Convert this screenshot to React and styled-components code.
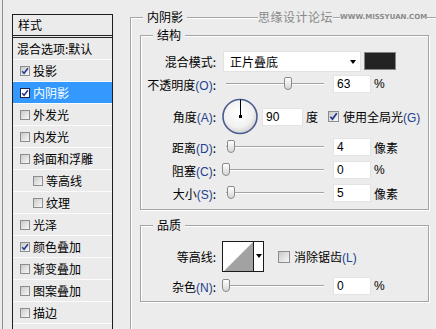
import styled, { createGlobalStyle } from "styled-components";

const GlobalStyle = createGlobalStyle`
  html, body {
    margin: 0;
    padding: 0;
    overflow: hidden;
    background: #ececec;
  }
  body {
    font-family: "Noto Sans CJK SC", "Liberation Sans", sans-serif;
    font-size: 12px;
    color: #000;
  }
`;

const Page = styled.div`
  display: flex;
  width: 436px;
  height: 329px;
  overflow: hidden;
  padding-left: 2px;
  box-sizing: border-box;
`;

const Frame = styled.div`
  display: flex;
  align-items: flex-start;
  flex: 1;
  border-left: 1px solid #8e8e8e;
  padding: 14px 0 0 9px;
`;

/* ---------- style list on the left ---------- */

const Sidebar = styled.div`
  width: 101px;
  height: 330px;
  flex-shrink: 0;
  box-sizing: border-box;
  border: 1px solid #1e1e1e;
  border-bottom: none;
  background: #ebebeb;
`;

const SidebarHeader = styled.div`
  height: 20px;
  line-height: 20px;
  padding-left: 5px;
  border-bottom: 3px double #222;
`;

const ListRow = styled.div`
  display: flex;
  align-items: center;
  gap: 3px;
  height: 22px;
  box-sizing: border-box;
  padding-left: ${(p) => p.$indent}px;
  border-bottom: 1px solid #fbfbfb;
  background: ${(p) => (p.$selected ? "#3399ff" : "transparent")};
  color: ${(p) => (p.$selected ? "#fff" : "#000")};
  white-space: nowrap;
`;

const Box = styled.span`
  display: inline-flex;
  align-items: center;
  justify-content: center;
  width: ${(p) => p.$size}px;
  height: ${(p) => p.$size}px;
  box-sizing: border-box;
  flex-shrink: 0;
  border: 1px solid ${(p) => (p.$light ? "#1c2550" : "#8d8d8d")};
  background: ${(p) =>
    p.$light ? "#fff" : "linear-gradient(135deg, #c9c9c9, #f8f8f8)"};
`;

function CheckBox({ checked, size = 10, light }) {
  return (
    <Box $size={size} $light={light}>
      {checked && (
        <svg width={size - 2} height={size - 2} viewBox="0 0 8 8">
          <path d="M1.2 4.2 L3.1 6.3 L6.9 1.2" fill="none" stroke="#26358a" strokeWidth="1.5" />
        </svg>
      )}
    </Box>
  );
}

const styles = [
  { name: "投影", checked: true },
  { name: "内阴影", checked: true, selected: true },
  { name: "外发光" },
  { name: "内发光" },
  { name: "斜面和浮雕" },
  { name: "等高线", sub: true },
  { name: "纹理", sub: true },
  { name: "光泽" },
  { name: "颜色叠加", checked: true },
  { name: "渐变叠加" },
  { name: "图案叠加" },
  { name: "描边" },
];

/* ---------- right side ---------- */

const Main = styled.div`
  margin: 3px 0 0 17px;
  flex-shrink: 0;
`;

const OuterGroup = styled.div`
  position: relative;
  width: 330px;
  height: 330px;
  box-sizing: border-box;
  border-top: 1px solid #a5a5a5;
  border-left: 1px solid #a5a5a5;
  box-shadow: inset 1px 1px 0 #fff;
  padding: 17px 0 0 9px;
`;

const Group = styled.div`
  position: relative;
  width: 289px;
  height: ${(p) => p.$height}px;
  margin-top: ${(p) => p.$gap || 0}px;
  box-sizing: border-box;
  border: 1px solid #a5a5a5;
  box-shadow: inset 1px 1px 0 #fff, 1px 1px 0 #fff;
  padding-top: 15px;
`;

const GroupTitle = styled.span`
  position: absolute;
  top: -8px;
  left: 12px;
  line-height: 14px;
  padding: 0 4px;
  background: #ececec;
`;

const Watermark = styled.div`
  position: absolute;
  top: -8px;
  left: 127px;
  display: flex;
  align-items: center;
  gap: 7px;
  height: 14px;
  color: #8a8a8a;
`;

const WatermarkText = styled.span`
  background: #ececec;
  line-height: 14px;
  letter-spacing: 0.5px;
`;

const WatermarkUrl = styled.span`
  background: #ececec;
  font-family: "DejaVu Sans", sans-serif;
  font-size: 7px;
  font-weight: bold;
  line-height: 14px;
  white-space: nowrap;
`;

const FormRow = styled.div`
  display: flex;
  align-items: center;
  height: ${(p) => p.$height || 18}px;
  margin-top: ${(p) => p.$gap || 0}px;
`;

const Label = styled.span`
  width: 77px;
  box-sizing: border-box;
  padding-right: 2px;
  margin-right: 4px;
  text-align: right;
  white-space: nowrap;
`;

const Key = styled.span`
  font-family: "Liberation Sans", sans-serif;
  color: #22408c;
`;

const Select = styled.div`
  position: relative;
  width: 138px;
  height: 21px;
  margin-left: 1px;
  box-sizing: border-box;
  background: #fff;
  border: 1px solid #e2e2e2;
  padding-left: 6px;
  line-height: 19px;

  &::after {
    content: "";
    position: absolute;
    right: 4px;
    top: 8px;
    border-left: 3.5px solid transparent;
    border-right: 3.5px solid transparent;
    border-top: 4px solid #000;
  }
`;

const Swatch = styled.div`
  width: 32px;
  height: 18px;
  margin: 0 0 2px 3px;
  box-sizing: border-box;
  border: 1px solid #858585;
  background: #232323;
`;

const SliderWrap = styled.div`
  position: relative;
  width: 102px;
  height: 14px;
`;

const Track = styled.div`
  position: absolute;
  left: 4px;
  right: 0;
  top: 6px;
  height: 1px;
  background: #a3a3a3;
  border-bottom: 1px solid #fff;
`;

const Thumb = styled.div`
  position: absolute;
  top: 0;
  width: 8px;
  height: 13px;
  box-sizing: border-box;
  border: 1px solid #8a8a8a;
  border-radius: 2px 2px 4px 4px;
  background: linear-gradient(#ffffff, #d6d6d6);
`;

function Slider({ pos }) {
  return (
    <SliderWrap>
      <Track />
      <Thumb style={{ left: pos }} />
    </SliderWrap>
  );
}

const Input = styled.div`
  width: ${(p) => p.$width || 38}px;
  height: 18px;
  margin-left: ${(p) => p.$left ?? 9}px;
  box-sizing: border-box;
  background: #fff;
  border: 1px solid #e4e4e4;
  padding-left: 3px;
  font-family: "Liberation Sans", sans-serif;
  font-size: 12px;
  line-height: 16px;
`;

const Unit = styled.span`
  margin-left: 3px;
  font-family: ${(p) => (p.$latin ? '"Liberation Sans", sans-serif' : "inherit")};
`;

const Check = styled.label`
  display: flex;
  align-items: center;
  gap: 4px;
  margin-left: ${(p) => p.$left}px;
  white-space: nowrap;
`;

const Contour = styled.div`
  display: flex;
  width: 42px;
  height: 31px;
  box-sizing: border-box;
  border: 1px solid #1a1a1a;
  background: #fff;
`;

const ContourArrow = styled.div`
  position: relative;
  flex: 1;
  border-left: 1px solid #1a1a1a;

  &::after {
    content: "";
    position: absolute;
    left: 2px;
    top: 12px;
    border-left: 3px solid transparent;
    border-right: 3px solid transparent;
    border-top: 4px solid #000;
  }
`;

function Dial() {
  return (
    <svg width="36" height="37" viewBox="0 0 36 37">
      <defs>
        <radialGradient id="dialFill" cx="45%" cy="40%" r="60%">
          <stop offset="0%" stopColor="#ffffff" />
          <stop offset="70%" stopColor="#f1f1f1" />
          <stop offset="100%" stopColor="#d2d2d2" />
        </radialGradient>
      </defs>
      <circle cx="18" cy="18.5" r="17" fill="url(#dialFill)" stroke="#4b5c8e" strokeWidth="1.6" />
      <line x1="18.5" y1="1.5" x2="18.5" y2="18.5" stroke="#000" strokeWidth="1" />
      <rect x="17" y="17" width="3" height="3" fill="#000" />
    </svg>
  );
}

export default function App() {
  return (
    <>
      <GlobalStyle />
      <Page>
        <Frame>
          <Sidebar>
            <SidebarHeader>样式</SidebarHeader>
            <ListRow $indent={4}>混合选项:默认</ListRow>
            {styles.map((s) => (
              <ListRow key={s.name} $indent={s.sub ? 20 : 7} $selected={s.selected}>
                <CheckBox checked={s.checked} light={s.selected} />
                {s.name}
              </ListRow>
            ))}
          </Sidebar>

          <Main>
            <OuterGroup>
              <GroupTitle>内阴影</GroupTitle>
              <Watermark>
                <WatermarkText>思缘设计论坛</WatermarkText>
                <WatermarkUrl>WWW.MISSYUAN.COM</WatermarkUrl>
              </Watermark>

              <Group $height={175}>
                <GroupTitle>结构</GroupTitle>
                <FormRow $height={21}>
                  <Label>混合模式:</Label>
                  <Select>正片叠底</Select>
                  <Swatch />
                </FormRow>
                <FormRow $gap={3}>
                  <Label>
                    不透明度<Key>(O)</Key>:
                  </Label>
                  <Slider pos={62} />
                  <Input>63</Input>
                  <Unit $latin>%</Unit>
                </FormRow>
                <FormRow $gap={5} $height={37}>
                  <Label>
                    角度<Key>(A)</Key>:
                  </Label>
                  <Dial />
                  <Input $width={41} $left={4}>90</Input>
                  <Unit>度</Unit>
                  <Check $left={10}>
                    <CheckBox checked size={11} />
                    <span>
                      使用全局光<Key>(G)</Key>
                    </span>
                  </Check>
                </FormRow>
                <FormRow $gap={3}>
                  <Label>
                    距离<Key>(D)</Key>:
                  </Label>
                  <Slider pos={5} />
                  <Input>4</Input>
                  <Unit>像素</Unit>
                </FormRow>
                <FormRow $gap={5}>
                  <Label>
                    阻塞<Key>(C)</Key>:
                  </Label>
                  <Slider pos={0} />
                  <Input>0</Input>
                  <Unit $latin>%</Unit>
                </FormRow>
                <FormRow $gap={5}>
                  <Label>
                    大小<Key>(S)</Key>:
                  </Label>
                  <Slider pos={5} />
                  <Input>5</Input>
                  <Unit>像素</Unit>
                </FormRow>
              </Group>

              <Group $height={77} $gap={15}>
                <GroupTitle>品质</GroupTitle>
                <FormRow $height={31}>
                  <Label>等高线:</Label>
                  <Contour>
                    <svg width="30" height="29" viewBox="0 0 30 29">
                      <polygon points="1,29 30,0 30,29" fill="#a2a2a2" />
                    </svg>
                    <ContourArrow />
                  </Contour>
                  <Check $left={14}>
                    <CheckBox size={12} />
                    <span>
                      消除锯齿<Key>(L)</Key>
                    </span>
                  </Check>
                </FormRow>
                <FormRow $gap={5}>
                  <Label>
                    杂色<Key>(N)</Key>:
                  </Label>
                  <Slider pos={0} />
                  <Input>0</Input>
                  <Unit $latin>%</Unit>
                </FormRow>
              </Group>
            </OuterGroup>
          </Main>
        </Frame>
      </Page>
    </>
  );
}
